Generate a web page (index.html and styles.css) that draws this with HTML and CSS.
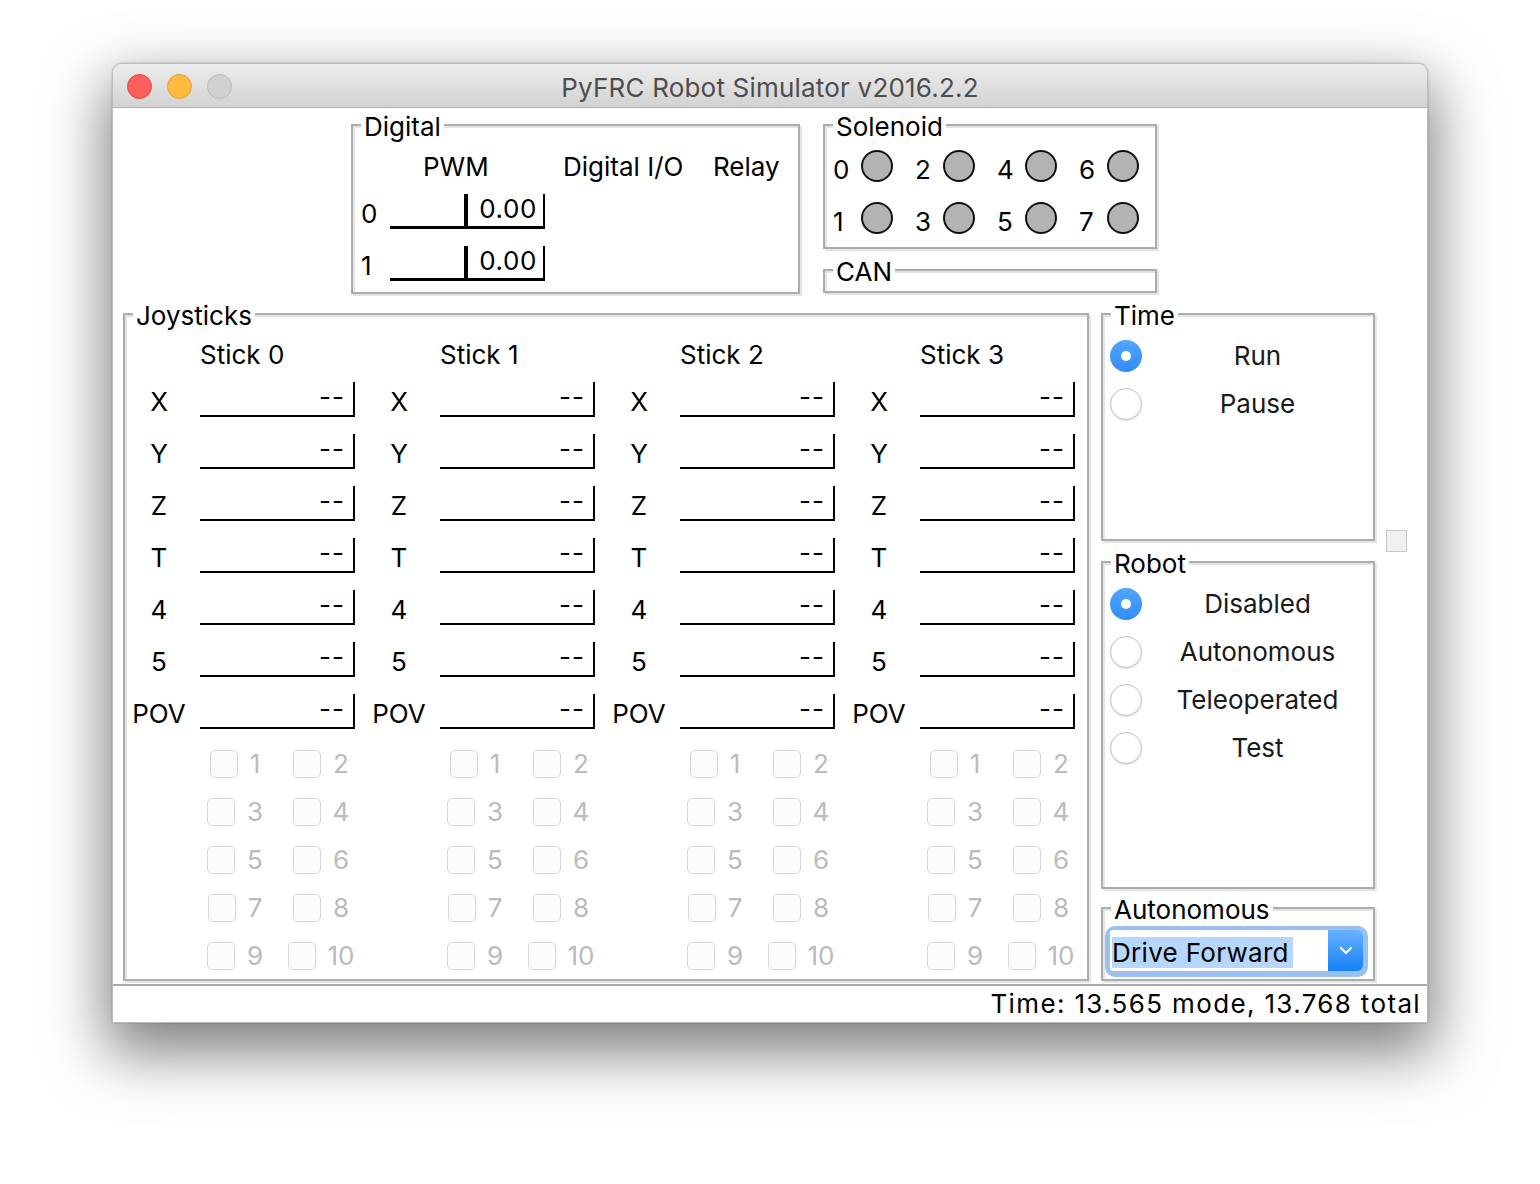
FILE: index.html
```html
<!DOCTYPE html>
<html>
<head>
<meta charset="utf-8">
<title>PyFRC Robot Simulator</title>
<link rel="stylesheet" href="styles.css">
</head>
<body>
<div class="window">
  <div class="titlebar">
    <div class="lights"><span class="light red"></span><span class="light yellow"></span><span class="light gray"></span></div>
    <div class="title">PyFRC Robot Simulator v2016.2.2</div>
    <div></div>
  </div>
  <div class="content">
    <div class="top-row">
      <div class="lf digital">
        <div class="lf-label">Digital</div>
        <div class="dg-row dg-head">
          <span></span><span class="h-pwm">PWM</span><span class="h-dio">Digital I/O</span><span class="h-relay">Relay</span>
        </div>
        <div class="dg-row">
          <span class="dg-num">0</span>
          <div class="pwm"><span class="pwm-left"></span><span class="pwm-bar"></span><span class="pwm-val">0.00</span></div>
        </div>
        <div class="dg-row dg-row2">
          <span class="dg-num">1</span>
          <div class="pwm"><span class="pwm-left"></span><span class="pwm-bar"></span><span class="pwm-val">0.00</span></div>
        </div>
      </div>
      <div class="top-right">
        <div class="lf solenoid">
          <div class="lf-label">Solenoid</div>
          <div class="sol-grid">
            <span class="sol-n">0</span><span class="sol-c"></span><span></span>
            <span class="sol-n">2</span><span class="sol-c"></span><span></span>
            <span class="sol-n">4</span><span class="sol-c"></span><span></span>
            <span class="sol-n">6</span><span class="sol-c"></span><span></span>
            <span class="sol-n">1</span><span class="sol-c"></span><span></span>
            <span class="sol-n">3</span><span class="sol-c"></span><span></span>
            <span class="sol-n">5</span><span class="sol-c"></span><span></span>
            <span class="sol-n">7</span><span class="sol-c"></span><span></span>
          </div>
        </div>
        <div class="lf can">
          <div class="lf-label">CAN</div>
        </div>
      </div>
    </div>

    <div class="main-row">
      <div class="lf joysticks">
        <div class="lf-label">Joysticks</div>
        <div class="sticks">
          <div class="stick">
            <div class="stick-h">Stick 0</div>
            <div class="ax"><span class="ax-l">X</span><div class="jw">--</div></div>
            <div class="ax"><span class="ax-l">Y</span><div class="jw">--</div></div>
            <div class="ax"><span class="ax-l">Z</span><div class="jw">--</div></div>
            <div class="ax"><span class="ax-l">T</span><div class="jw">--</div></div>
            <div class="ax"><span class="ax-l">4</span><div class="jw">--</div></div>
            <div class="ax"><span class="ax-l">5</span><div class="jw">--</div></div>
            <div class="ax"><span class="ax-l">POV</span><div class="jw">--</div></div>
            <div class="btns">
              <div class="cb"><span class="box"></span>1</div><div class="cb"><span class="box"></span>2</div>
              <div class="cb"><span class="box"></span>3</div><div class="cb"><span class="box"></span>4</div>
              <div class="cb"><span class="box"></span>5</div><div class="cb"><span class="box"></span>6</div>
              <div class="cb"><span class="box"></span>7</div><div class="cb"><span class="box"></span>8</div>
              <div class="cb"><span class="box"></span>9</div><div class="cb"><span class="box"></span>10</div>
            </div>
          </div>
          <div class="stick">
            <div class="stick-h">Stick 1</div>
            <div class="ax"><span class="ax-l">X</span><div class="jw">--</div></div>
            <div class="ax"><span class="ax-l">Y</span><div class="jw">--</div></div>
            <div class="ax"><span class="ax-l">Z</span><div class="jw">--</div></div>
            <div class="ax"><span class="ax-l">T</span><div class="jw">--</div></div>
            <div class="ax"><span class="ax-l">4</span><div class="jw">--</div></div>
            <div class="ax"><span class="ax-l">5</span><div class="jw">--</div></div>
            <div class="ax"><span class="ax-l">POV</span><div class="jw">--</div></div>
            <div class="btns">
              <div class="cb"><span class="box"></span>1</div><div class="cb"><span class="box"></span>2</div>
              <div class="cb"><span class="box"></span>3</div><div class="cb"><span class="box"></span>4</div>
              <div class="cb"><span class="box"></span>5</div><div class="cb"><span class="box"></span>6</div>
              <div class="cb"><span class="box"></span>7</div><div class="cb"><span class="box"></span>8</div>
              <div class="cb"><span class="box"></span>9</div><div class="cb"><span class="box"></span>10</div>
            </div>
          </div>
          <div class="stick">
            <div class="stick-h">Stick 2</div>
            <div class="ax"><span class="ax-l">X</span><div class="jw">--</div></div>
            <div class="ax"><span class="ax-l">Y</span><div class="jw">--</div></div>
            <div class="ax"><span class="ax-l">Z</span><div class="jw">--</div></div>
            <div class="ax"><span class="ax-l">T</span><div class="jw">--</div></div>
            <div class="ax"><span class="ax-l">4</span><div class="jw">--</div></div>
            <div class="ax"><span class="ax-l">5</span><div class="jw">--</div></div>
            <div class="ax"><span class="ax-l">POV</span><div class="jw">--</div></div>
            <div class="btns">
              <div class="cb"><span class="box"></span>1</div><div class="cb"><span class="box"></span>2</div>
              <div class="cb"><span class="box"></span>3</div><div class="cb"><span class="box"></span>4</div>
              <div class="cb"><span class="box"></span>5</div><div class="cb"><span class="box"></span>6</div>
              <div class="cb"><span class="box"></span>7</div><div class="cb"><span class="box"></span>8</div>
              <div class="cb"><span class="box"></span>9</div><div class="cb"><span class="box"></span>10</div>
            </div>
          </div>
          <div class="stick">
            <div class="stick-h">Stick 3</div>
            <div class="ax"><span class="ax-l">X</span><div class="jw">--</div></div>
            <div class="ax"><span class="ax-l">Y</span><div class="jw">--</div></div>
            <div class="ax"><span class="ax-l">Z</span><div class="jw">--</div></div>
            <div class="ax"><span class="ax-l">T</span><div class="jw">--</div></div>
            <div class="ax"><span class="ax-l">4</span><div class="jw">--</div></div>
            <div class="ax"><span class="ax-l">5</span><div class="jw">--</div></div>
            <div class="ax"><span class="ax-l">POV</span><div class="jw">--</div></div>
            <div class="btns">
              <div class="cb"><span class="box"></span>1</div><div class="cb"><span class="box"></span>2</div>
              <div class="cb"><span class="box"></span>3</div><div class="cb"><span class="box"></span>4</div>
              <div class="cb"><span class="box"></span>5</div><div class="cb"><span class="box"></span>6</div>
              <div class="cb"><span class="box"></span>7</div><div class="cb"><span class="box"></span>8</div>
              <div class="cb"><span class="box"></span>9</div><div class="cb"><span class="box"></span>10</div>
            </div>
          </div>
        </div>
      </div>

      <div class="side">
        <div class="lf time">
          <div class="lf-label">Time</div>
          <div class="radio-row"><span class="radio on"></span><span class="r-text">Run</span></div>
          <div class="radio-row"><span class="radio"></span><span class="r-text">Pause</span></div>
        </div>
        <div class="lf robot">
          <div class="lf-label">Robot</div>
          <div class="radio-row"><span class="radio on"></span><span class="r-text">Disabled</span></div>
          <div class="radio-row"><span class="radio"></span><span class="r-text">Autonomous</span></div>
          <div class="radio-row"><span class="radio"></span><span class="r-text">Teleoperated</span></div>
          <div class="radio-row"><span class="radio"></span><span class="r-text">Test</span></div>
        </div>
        <div class="lf auto">
          <div class="lf-label">Autonomous</div>
          <div class="combo">
            <div class="combo-field"><span class="sel">Drive Forward</span></div>
            <div class="combo-btn">
              <svg width="14" height="9" viewBox="0 0 14 9"><polyline points="2,2 7,7 12,2" fill="none" stroke="#fff" stroke-width="2.2" stroke-linecap="round" stroke-linejoin="round"/></svg>
            </div>
          </div>
        </div>
      </div>

      <div class="extra"><div class="mini"></div></div>
    </div>
  </div>
  <div class="statusbar">Time: 13.565 mode, 13.768 total</div>
</div>
</body>
</html>
```

FILE: styles.css
```css
html, body {
  margin: 0;
  padding: 0;
  background: #ffffff;
}

body {
  font-family: Inter, "DejaVu Sans", sans-serif;
  font-size: 26px;
  color: #000;
  width: 1540px;
  height: 1184px;
  overflow: hidden;
}

.window {
  margin: 63px 0 0 112px;
  width: 1316px;
  box-sizing: border-box;
  border: 1px solid #bdbdbd;
  border-radius: 10px 10px 0 0;
  background: #fff;
  box-shadow: 0 24px 60px 6px rgba(0, 0, 0, 0.5), 0 0 2px rgba(0, 0, 0, 0.3);
}

/* ---------- title bar ---------- */
.titlebar {
  height: 43px;
  border-bottom: 1px solid #b3b3b3;
  border-radius: 9px 9px 0 0;
  background: linear-gradient(#ececec, #d3d3d3);
  display: grid;
  grid-template-columns: 1fr auto 1fr;
  align-items: center;
}

.lights {
  display: flex;
  gap: 15px;
  padding-left: 14px;
}

.light {
  width: 25px;
  height: 25px;
  border-radius: 50%;
  box-sizing: border-box;
}

.light.red { background: #fc605b; border: 1px solid #de4a44; }
.light.yellow { background: #fdbc40; border: 1px solid #dea035; }
.light.gray { background: #d1d1d1; border: 1px solid #b8b8b8; }

.title {
  font-size: 26px;
  letter-spacing: 0.2px;
  color: #4d4d4d;
  line-height: 43px;
  padding-top: 2px;
}

/* ---------- label frames ---------- */
.lf {
  box-sizing: border-box;
  border: 2px solid #acacac;
  box-shadow: inset 2px 2px 0 #e4e4e4, 2px 2px 0 #e4e4e4;
}

.lf-label {
  width: fit-content;
  margin: -13px 0 0 8px;
  padding: 0 3px;
  height: 28px;
  line-height: 28px;
  background: #fff;
}

.content {
  display: flex;
  flex-direction: column;
}

.top-row {
  display: flex;
  margin: 16px 0 0 238px;
  gap: 23px;
  align-items: flex-start;
}

/* Digital */
.digital {
  width: 449px;
  height: 170px;
}

.dg-row {
  display: grid;
  grid-template-columns: 29px 155px 155px 90px;
  padding-left: 8px;
}

.dg-head {
  margin-top: 11px;
  height: 42px;
  line-height: 30px;
}

.h-pwm { padding-left: 33px; }
.h-dio { padding-left: 18px; }
.h-relay { padding-left: 13px; }

.dg-row2 { margin-top: 17px; }

.dg-num {
  align-self: end;
  line-height: 30px;
}

.pwm {
  height: 35px;
  box-sizing: border-box;
  border-bottom: 3px solid #000;
  border-right: 2px solid #000;
  display: flex;
}

.pwm-left { width: 74px; }
.pwm-bar { width: 4px; background: #000; }
.pwm-val {
  flex: 1;
  text-align: right;
  padding-right: 6px;
  line-height: 30px;
  letter-spacing: 0.6px;
}

/* Solenoid */
.top-right {
  display: flex;
  flex-direction: column;
  gap: 20px;
}

.solenoid {
  width: 334px;
  height: 125px;
}

.sol-grid {
  display: grid;
  grid-template-columns: repeat(4, 28px 32px 22px);
  grid-auto-rows: 32px;
  row-gap: 20px;
  margin: 9px 0 0 8px;
}

.sol-n {
  align-self: end;
  line-height: 24px;
}

.sol-c {
  width: 32px;
  height: 32px;
  box-sizing: border-box;
  border-radius: 50%;
  background: #b3b3b3;
  border: 2px solid #111;
}

.can {
  width: 334px;
  height: 24px;
}

/* ---------- main row ---------- */
.main-row {
  display: flex;
  margin: 19px 0 0 10px;
  align-items: flex-start;
}

.joysticks {
  width: 966px;
  height: 668px;
}

.sticks {
  display: grid;
  grid-template-columns: repeat(4, 240px);
}

.stick {
  display: flex;
  flex-direction: column;
}

.stick-h {
  margin-top: 10px;
  padding-left: 75px;
  line-height: 30px;
  height: 30px;
}

.ax {
  display: grid;
  grid-template-columns: 68px 155px;
  column-gap: 7px;
  margin-top: 17px;
}

.stick-h + .ax { margin-top: 12px; }

.ax-l {
  align-self: end;
  text-align: center;
  line-height: 30px;
}

.jw {
  height: 35px;
  box-sizing: border-box;
  border-bottom: 2px solid #000;
  border-right: 2px solid #000;
  text-align: right;
  padding-right: 8px;
  line-height: 30px;
  letter-spacing: 1px;
}

.btns {
  display: grid;
  grid-template-columns: 70px 102px;
  grid-auto-rows: 28px;
  row-gap: 20px;
  margin: 21px 0 0 75px;
  justify-items: center;
}

.cb {
  display: flex;
  align-items: center;
  gap: 12px;
  color: #bababa;
  line-height: 28px;
}

.box {
  width: 28px;
  height: 28px;
  box-sizing: border-box;
  border: 1px solid #d7d7d7;
  border-radius: 5px;
  background: #fcfcfc;
}

/* ---------- side column ---------- */
.side {
  display: flex;
  flex-direction: column;
  margin-left: 12px;
  width: 274px;
}

.time { height: 228px; }
.robot { height: 328px; margin-top: 20px; }
.auto { height: 74px; margin-top: 18px; }

.radio-row {
  display: flex;
  align-items: center;
  padding-left: 7px;
  height: 32px;
  margin-top: 16px;
}

.lf-label + .radio-row { margin-top: 10px; }

.radio {
  width: 32px;
  height: 32px;
  box-sizing: border-box;
  border-radius: 50%;
  border: 1px solid #c3c3c3;
  background: #fff;
  box-shadow: 0 1px 1px rgba(0, 0, 0, 0.12);
  display: flex;
  align-items: center;
  justify-content: center;
}

.radio.on {
  border: none;
  background: linear-gradient(#53a5fb, #2f8cf7);
  box-shadow: none;
}

.radio.on::after {
  content: "";
  width: 10px;
  height: 10px;
  border-radius: 50%;
  background: #fff;
}

.r-text {
  flex: 1;
  text-align: center;
  line-height: 32px;
  color: #1a1a1a;
}

.combo {
  margin: 2px 0 0 2px;
  width: 263px;
  height: 51px;
  box-sizing: border-box;
  border-radius: 10px;
  background: #9ac0f1;
  padding: 4px 5px 6px 5px;
  display: flex;
}

.combo-field {
  flex: 1;
  background: #fff;
  border-radius: 3px 0 0 3px;
  padding: 7px 0 0 2px;
  box-sizing: border-box;
  line-height: 31px;
}

.sel {
  display: inline-block;
  background: #b6d6fb;
  padding-right: 4px;
  letter-spacing: 0.3px;
}

.combo-btn {
  width: 35px;
  border-radius: 0 6px 6px 0;
  background: linear-gradient(#6ab2fb, #1581fb);
  display: flex;
  align-items: center;
  justify-content: center;
}

.extra {
  margin-left: 11px;
  padding-top: 217px;
}

.mini {
  width: 21px;
  height: 22px;
  box-sizing: border-box;
  border: 1px solid #c8c8c8;
  background: #f0f0f0;
}

/* ---------- status bar ---------- */
.statusbar {
  margin-top: 3px;
  height: 38px;
  box-sizing: border-box;
  border-top: 2px solid #a9a9a9;
  text-align: right;
  padding-right: 6px;
  line-height: 36px;
  letter-spacing: 1.35px;
}
```
